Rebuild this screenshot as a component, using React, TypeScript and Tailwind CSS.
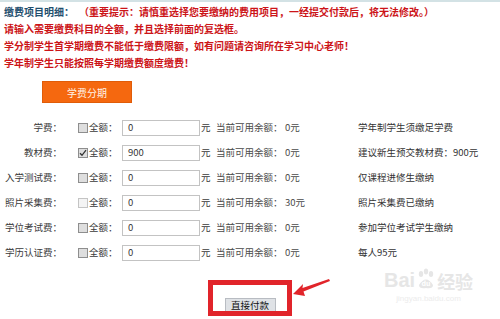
const rows = [
  { label: "学费：", checked: false, value: "0", bal: "0元", desc: "学年制学生须缴足学费" },
  { label: "教材费：", checked: true, value: "900", bal: "0元", desc: "建议新生预交教材费：900元" },
  { label: "入学测试费：", checked: false, value: "0", bal: "0元", desc: "仅课程进修生缴纳" },
  { label: "照片采集费：", checked: false, value: "0", bal: "30元", desc: "照片采集费已缴纳", light: true },
  { label: "学位考试费：", checked: false, value: "0", bal: "0元", desc: "参加学位考试学生缴纳" },
  { label: "学历认证费：", checked: false, value: "0", bal: "0元", desc: "每人95元" },
];

function Box({ checked, light }: { checked: boolean; light?: boolean }) {
  return (
    <span
      className={
        light
          ? "w-[10px] h-[10px] border border-[#c4c4c4] bg-[#f4f4f4] flex items-center justify-center"
          : "w-[10px] h-[10px] border border-[#8e8e8e] bg-[#dedede] flex items-center justify-center"
      }
    >
      {checked && (
        <svg width="8" height="8" viewBox="0 0 8 8">
          <path d="M1 4.2 L3 6.3 L7 1.2" fill="none" stroke="#333" strokeWidth="1.3" />
        </svg>
      )}
    </span>
  );
}

export default function App() {
  return (
    <div
      className="relative w-[500px] h-[319px] overflow-hidden bg-white border-t-2 border-[#d3e2e5]"
      style={{ fontFamily: '"Noto Sans CJK SC", "Liberation Sans", sans-serif' }}
    >
      {/* 提示 */}
      <div className="pl-[4px] pt-[1px] text-[10px] font-bold leading-[17px] text-[#cc1418]">
        <div>
          <span className="text-[#1f4f6e]">缴费项目明细：</span>
          <span className="ml-[10px]">（重要提示：请慎重选择您要缴纳的费用项目，一经提交付款后，将无法修改。）</span>
        </div>
        <div>请输入需要缴费科目的全额，并且选择前面的复选框。</div>
        <div>学分制学生首学期缴费不能低于缴费限额，如有问题请咨询所在学习中心老师！</div>
        <div>学年制学生只能按照每学期缴费额度缴费！</div>
      </div>

      <div className="ml-[42px] mt-[10px] w-[90px] h-[22px] bg-[#f5680f] border border-[#e05c08] flex items-center justify-center text-[10px] text-[#fff3e6]">
        学费分期
      </div>

      {/* 费用明细 */}
      <div className="mt-[12px] text-[9.5px] text-[#3a3a3a]">
        {rows.map((r) => (
          <div key={r.label} className="flex items-center h-[25px]">
            <span className="w-[62px] text-right">{r.label}</span>
            <span className="ml-[16px]">
              <Box checked={r.checked} light={r.light} />
            </span>
            <span className="ml-[1px] w-[33px]">全额：</span>
            <span className="w-[78px] h-[16px] border border-[#c3c3c3] bg-white pl-[5px] flex items-center text-[9.5px] text-[#333]">
              {r.value}
            </span>
            <span className="ml-[1px] w-[15px]">元</span>
            <span className="w-[69px] text-[#4a4a4a]">当前可用余额：</span>
            <span className="w-[73px] text-[#4a4a4a]">{r.bal}</span>
            <span className="text-[#333]">{r.desc}</span>
          </div>
        ))}
      </div>

      {/* 付款 */}
      <div className="ml-[208px] mt-[15px] w-[84px] h-[36px] border-[5px] border-[#e1242a] flex items-end justify-center">
        <span className="w-[51px] h-[13px] bg-[#dfe2e6] border-t border-x border-[#b8bcc2] flex items-center justify-center text-[9.5px] text-[#111]">
          直接付款
        </span>
      </div>

      {/* 箭头 */}
      <svg className="absolute left-[289px] top-[272px]" width="46" height="26" viewBox="0 0 46 26">
        <polygon points="4,20 14,10 13.5,14 40,5 41,7 14.5,17.5 16,22" fill="#e1242a" />
      </svg>

      {/* 水印 */}
      <div className="absolute left-[384px] top-[266px] flex flex-col items-center text-[#e6e6e6]">
        <div className="flex items-end gap-[1px] font-bold leading-none">
          <span className="text-[20px]" style={{ fontFamily: '"Liberation Sans", sans-serif' }}>
            Bai
          </span>
          <svg width="20" height="22" viewBox="0 0 20 22">
            <g fill="#e6e6e6">
              <ellipse cx="5" cy="6" rx="2.2" ry="3" />
              <ellipse cx="10" cy="3.5" rx="2.2" ry="3" />
              <ellipse cx="15" cy="6" rx="2.2" ry="3" />
              <path d="M3 17 Q10 6 17 17 Q17 21 10 20 Q3 21 3 17 Z" />
            </g>
            <text x="10" y="18" fontSize="7" fill="#fff" textAnchor="middle" fontWeight="bold">
              du
            </text>
          </svg>
          <span className="text-[18px] leading-[18px]">经验</span>
        </div>
        <span className="mt-[4px] text-[8px] leading-[10px] text-[#ececec]" style={{ fontFamily: '"Liberation Sans", sans-serif' }}>
          jingyan.baidu.com
        </span>
      </div>
    </div>
  );
}
